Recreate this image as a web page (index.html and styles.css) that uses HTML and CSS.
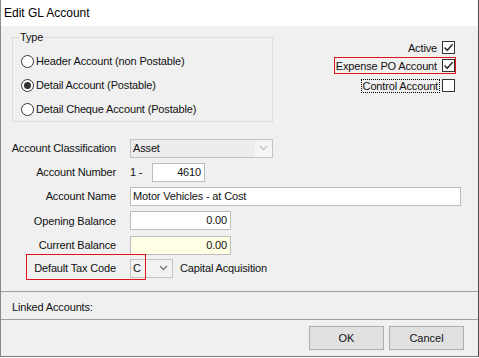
FILE: index.html
```html
<!DOCTYPE html>
<html>
<head>
    <meta charset="utf-8">
    <title>Edit GL Account</title>
    <link rel="stylesheet" href="styles.css">
</head>
<body>

<div class="window">
    <div class="titlebar">Edit GL Account</div>

    <div class="top">
        <fieldset class="group">
            <legend>Type</legend>
            <div class="radio-row"><span class="radio"></span>Header Account (non Postable)</div>
            <div class="radio-row"><span class="radio on"></span>Detail Account (Postable)</div>
            <div class="radio-row"><span class="radio"></span>Detail Cheque Account (Postable)</div>
        </fieldset>

        <div class="checks">
            <div class="check-row">
                <span class="check-label">Active</span>
                <span class="box"><svg width="11" height="11" viewBox="0 0 11 11"><path d="M1.5 5.5 L4.2 8.3 L9.6 2.2" fill="none" stroke="#333" stroke-width="1.6"/></svg></span>
            </div>
            <div class="check-row marked">
                <span class="check-label">Expense PO Account</span>
                <span class="box"><svg width="11" height="11" viewBox="0 0 11 11"><path d="M1.5 5.5 L4.2 8.3 L9.6 2.2" fill="none" stroke="#333" stroke-width="1.6"/></svg></span>
            </div>
            <div class="check-row focus">
                <span class="check-label">Control Account</span>
                <span class="box"></span>
            </div>
        </div>
    </div>

    <div class="form">
        <div class="lbl">Account Classification</div>
        <div class="combo wide disabled">
            <span class="combo-text">Asset</span>
            <span class="arrow"><svg width="9" height="6" viewBox="0 0 9 6"><path d="M1 1 L4.5 4.5 L8 1" fill="none" stroke="#c4c4c4" stroke-width="1.3"/></svg></span>
        </div>

        <div class="lbl">Account Number</div>
        <div class="field-line">
            <span class="prefix">1 -</span>
            <div class="edit num short">4610</div>
        </div>

        <div class="lbl">Account Name</div>
        <div class="edit full">Motor Vehicles - at Cost</div>

        <div class="lbl">Opening Balance</div>
        <div class="edit num money">0.00</div>

        <div class="lbl">Current Balance</div>
        <div class="edit num money calc">0.00</div>

        <div class="lbl">Default Tax Code</div>
        <div class="field-line">
            <div class="combo tax">
                <span class="combo-text">C</span>
                <span class="arrow"><svg width="9" height="6" viewBox="0 0 9 6"><path d="M1 1 L4.5 4.5 L8 1" fill="none" stroke="#7a7a7a" stroke-width="1.4"/></svg></span>
            </div>
            <span class="tax-desc">Capital Acquisition</span>
        </div>

        <div class="highlight"></div>
    </div>

    <div class="linked">Linked Accounts:</div>

    <div class="footer">
        <button class="btn">OK</button>
        <button class="btn">Cancel</button>
    </div>
</div>

</body>
</html>
```

FILE: styles.css
```css
body {
    margin: 0;
    background-color: #FFF;
    font-family: "Liberation Sans", Arial, sans-serif;
    font-size: 11px;
    letter-spacing: -0.15px;
    color: #111;
}

.window {
    width: 479px;
    height: 357px;
    box-sizing: border-box;
    background-color: #F0F0F0;
    border-left: 1px solid #8A8A8A;
    border-right: 1px solid #4A4A4A;
    border-bottom: 1px solid #7A7A7A;
    display: flex;
    flex-direction: column;
}

.titlebar {
    height: 26px;
    line-height: 26px;
    padding-left: 3px;
    background-color: #FFF;
    font-size: 12px;
    letter-spacing: 0;
    color: #000;
}

/* type group and flags */

.top {
    height: 110px;
    box-sizing: border-box;
    padding: 4px 23px 0 11px;
    display: flex;
}

.group {
    margin: 0;
    width: 261px;
    height: 92px;
    box-sizing: border-box;
    border: 1px solid #DCDCDC;
    padding: 5px 0 0 6px;
}

.group legend {
    padding: 0 1px;
    line-height: 14px;
}

.radio-row {
    height: 24px;
    display: flex;
    align-items: center;
    gap: 2px;
    margin-left: 2px;
}

.radio {
    width: 13px;
    height: 13px;
    box-sizing: border-box;
    border: 1px solid #333;
    border-radius: 50%;
    background-color: #FFF;
    display: flex;
    align-items: center;
    justify-content: center;
}

.radio.on::after {
    content: "";
    width: 7px;
    height: 7px;
    border-radius: 50%;
    background-color: #333;
}

.checks {
    margin-left: auto;
    padding-top: 11px;
    display: flex;
    flex-direction: column;
    align-items: flex-end;
}

.check-row {
    display: flex;
    align-items: center;
    height: 13px;
}

.check-label {
    margin-right: 5px;
    line-height: 12px;
}

.box {
    width: 13px;
    height: 13px;
    box-sizing: border-box;
    border: 1px solid #333;
    background-color: #FFF;
    display: flex;
    align-items: center;
    justify-content: center;
}

.check-row.marked {
    height: 17px;
    box-sizing: border-box;
    margin-top: 3px;
    margin-right: -1px;
    border: 1px solid #E0141E;
    padding-left: 1px;
}

.check-row.focus {
    margin-top: 5px;
}

.check-row.focus .check-label {
    height: 14px;
    box-sizing: border-box;
    border: 1px dotted #000;
    padding: 0 1px;
    margin-right: 2px;
    display: flex;
    align-items: center;
}

/* account details */

.form {
    position: relative;
    display: grid;
    grid-template-columns: 115px 331px;
    grid-template-rows: 24px 24px 24px 25px 24px 22px;
    column-gap: 14px;
    height: 156px;
    box-sizing: border-box;
    border-bottom: 1px solid #A0A0A0;
}

.lbl {
    justify-self: end;
    align-self: center;
    white-space: nowrap;
}

.edit {
    align-self: center;
    height: 19px;
    line-height: 17px;
    box-sizing: border-box;
    border: 1px solid #BCBCBC;
    background-color: #FFF;
    padding: 0 2px;
    white-space: nowrap;
}

.edit.num {
    text-align: right;
    padding-right: 3px;
}

.edit.short {
    width: 53px;
}

.edit.money {
    width: 101px;
}

.edit.calc {
    background-color: #FFFFE6;
}

.field-line {
    align-self: center;
    display: flex;
    align-items: center;
}

.prefix {
    width: 22px;
}

.combo {
    align-self: center;
    height: 19px;
    box-sizing: border-box;
    border: 1px solid #C4C4C4;
    background-color: #EFEFEF;
    display: flex;
    align-items: center;
}

.combo.wide {
    width: 143px;
}

.combo.disabled {
    background-color: #ECECEC;
}

.combo.disabled .arrow {
    background-color: #F4F4F4;
}

.combo-text {
    flex: 1;
    padding-left: 2px;
}

.arrow {
    width: 17px;
    height: 100%;
    display: flex;
    align-items: center;
    justify-content: center;
}

.combo.tax {
    width: 43px;
    background-color: #F2F2F2;
}

.tax-desc {
    margin-left: 7px;
}

.highlight {
    position: absolute;
    left: 25px;
    top: 118px;
    width: 120px;
    height: 26px;
    box-sizing: border-box;
    border: 1px solid #E0141E;
}

/* linked + buttons */

.linked {
    height: 28px;
    box-sizing: border-box;
    padding: 9px 0 0 11px;
    border-bottom: 1px solid #A0A0A0;
}

.footer {
    flex: 1;
    display: flex;
    justify-content: flex-end;
    gap: 5px;
    padding: 6px 14px 0 0;
}

.btn {
    width: 75px;
    height: 24px;
    font: inherit;
    color: #111;
    background-color: #E1E1E1;
    border: 1px solid #ADADAD;
    padding: 0;
}
```
